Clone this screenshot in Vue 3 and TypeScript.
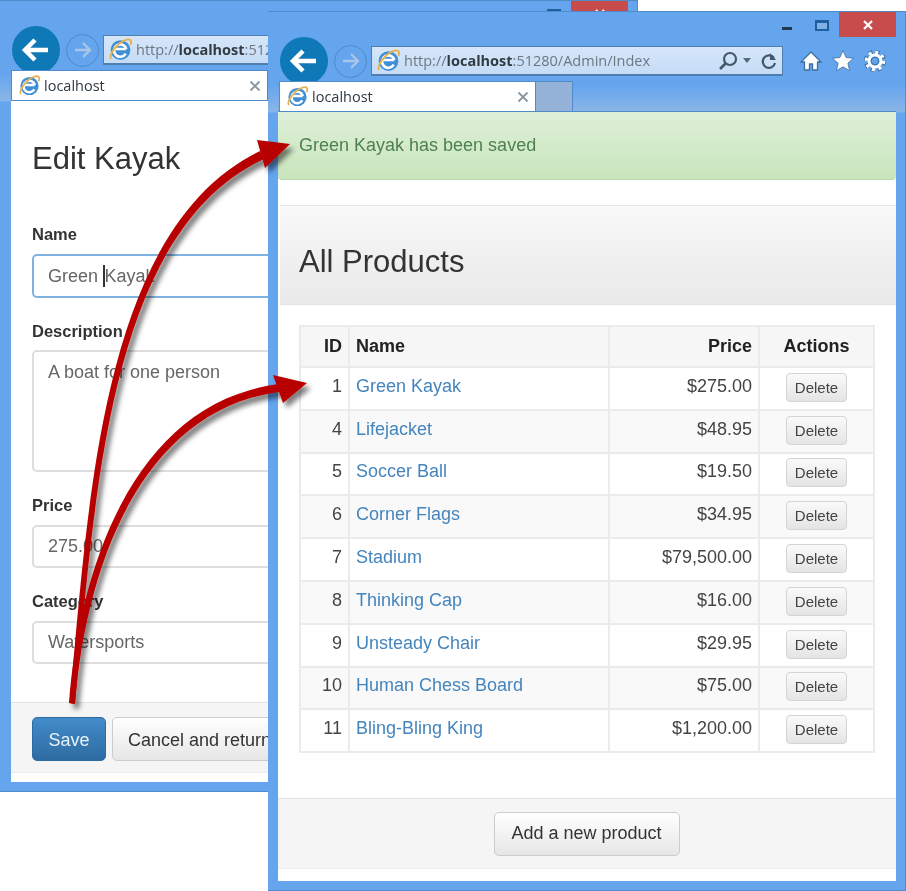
<script setup lang="ts">
interface Win {
  id: string
  cls: string
}

interface Product {
  id: number
  name: string
  price: string
}

const windows: Win[] = [
  { id: 'edit', cls: 'browser--edit' },
  { id: 'list', cls: 'browser--list' }
]

const products: Product[] = [
  { id: 1, name: 'Green Kayak', price: '$275.00' },
  { id: 4, name: 'Lifejacket', price: '$48.95' },
  { id: 5, name: 'Soccer Ball', price: '$19.50' },
  { id: 6, name: 'Corner Flags', price: '$34.95' },
  { id: 7, name: 'Stadium', price: '$79,500.00' },
  { id: 8, name: 'Thinking Cap', price: '$16.00' },
  { id: 9, name: 'Unsteady Chair', price: '$29.95' },
  { id: 10, name: 'Human Chess Board', price: '$75.00' },
  { id: 11, name: 'Bling-Bling King', price: '$1,200.00' }
]
</script>

<template>
  <div class="desktop">
    <svg class="defs" width="0" height="0">
      <defs>
        <symbol id="ie-logo" viewBox="0 0 24 24">
          <circle cx="12" cy="12.5" r="9.5" fill="#3f8fd6" />
          <path d="M6.5 11.5h11M17 16a6 6 0 1 1 .6-4.5" fill="none" stroke="#fff" stroke-width="2.6" />
          <path d="M3 21C.5 17 9 5 18 2.5c4-1 5 1.500 3.500 5" fill="none" stroke="#e6b04a" stroke-width="1.800" />
        </symbol>
      </defs>
    </svg>

    <section v-for="win in windows" :key="win.id" class="browser" :class="win.cls">
      <div class="titlebar">
        <span class="win-min"></span>
        <span class="win-max"></span>
        <span class="win-close">
          <svg width="12" height="12" viewBox="0 0 12 12"><path d="M2 2l8 8M10 2l-8 8" stroke="#fff" stroke-width="2.200" /></svg>
        </span>
      </div>

      <div class="toolbar">
        <span class="nav-back">
          <svg width="30" height="26" viewBox="0 0 30 26">
            <path d="M27 13H6M14 3L4 13l10 10" fill="none" stroke="#fff" stroke-width="4.500" />
          </svg>
        </span>
        <span class="nav-forward">
          <svg width="20" height="18" viewBox="0 0 20 18">
            <path d="M2 9h15M10 2l7 7-7 7" fill="none" stroke="#a9c6e8" stroke-width="2.400" />
          </svg>
        </span>
        <div class="address">
          <svg class="ie" width="25" height="25"><use href="#ie-logo" /></svg>
          <span class="url">http://<b>localhost</b>:51280/Admin/Index</span>
          <span class="address-tools">
            <svg width="22" height="22" viewBox="0 0 22 22">
              <circle cx="13" cy="9" r="6" fill="none" stroke="#44586c" stroke-width="2.200" />
              <path d="M8.500 13.500L3 19" stroke="#44586c" stroke-width="2.600" />
            </svg>
            <svg width="10" height="6" viewBox="0 0 10 6"><path d="M1 0h8L5 5z" fill="#56697c" /></svg>
            <svg class="refresh" width="18" height="20" viewBox="0 0 18 20">
              <path d="M14 7a6.200 6.200 0 1 0 1 5" fill="none" stroke="#44586c" stroke-width="2.200" />
              <path d="M10 2v7h6z" fill="#44586c" />
            </svg>
          </span>
        </div>
        <div class="tools">
          <svg width="24" height="24" viewBox="0 0 24 24">
            <path d="M12 3L2 13h3.500v8h5v-6h3v6h5v-8H22z" fill="#fff" stroke="#3f6d9f" stroke-width="1.300" />
          </svg>
          <svg width="24" height="24" viewBox="0 0 24 24">
            <path d="M12 1.500l3.100 7 7.400.700-5.600 5 1.700 7.500L12 17.800l-6.600 3.900 1.700-7.500-5.600-5 7.400-.7z" fill="#fff" stroke="#3f6d9f" stroke-width=".8" />
          </svg>
          <svg width="24" height="24" viewBox="0 0 24 24">
            <circle cx="12" cy="12" r="8.600" fill="none" stroke="#3f6d9f" stroke-width="5" stroke-dasharray="4 2.760" />
            <circle cx="12" cy="12" r="8.600" fill="none" stroke="#fff" stroke-width="3.400" stroke-dasharray="3 3.760" />
            <circle cx="12" cy="12" r="6" fill="none" stroke="#fff" stroke-width="3" />
            <circle cx="12" cy="12" r="3.800" fill="#63a4ee" stroke="#3f6d9f" />
          </svg>
        </div>
      </div>

      <div class="tabs">
        <div class="tab">
          <svg width="23" height="23"><use href="#ie-logo" /></svg>
          <span class="tab-title">localhost</span>
          <svg class="tab-x" width="12" height="12" viewBox="0 0 12 12">
            <path d="M1.500 1.500l9 9M10.500 1.500l-9 9" stroke="#8b959e" stroke-width="1.800" />
          </svg>
        </div>
        <div class="tab-empty"></div>
      </div>

      <div v-if="win.id === 'edit'" class="page page--form">
        <div class="form-body">
          <h1>Edit Kayak</h1>
          <label>Name</label>
          <div class="field field--focus">Green <i class="caret"></i>Kayak</div>
          <label class="label--tight">Description</label>
          <div class="field field--area">A boat for one person</div>
          <label>Price</label>
          <div class="field field--short">275.00</div>
          <label>Category</label>
          <div class="field field--short">Watersports</div>
        </div>
        <footer class="page-footer page-footer--form">
          <button class="btn btn--primary">Save</button>
          <button class="btn btn--cancel">Cancel and return to List</button>
        </footer>
      </div>

      <div v-else class="page page--list">
        <div class="alert">Green Kayak has been saved</div>
        <div class="heading">All Products</div>
        <div class="table-wrap">
          <table>
            <colgroup>
              <col style="width: 49px" />
              <col style="width: 260px" />
              <col style="width: 150px" />
              <col style="width: 115px" />
            </colgroup>
            <thead>
              <tr>
                <th class="num">ID</th>
                <th>Name</th>
                <th class="num">Price</th>
                <th class="mid">Actions</th>
              </tr>
            </thead>
            <tbody>
              <tr v-for="p in products" :key="p.id">
                <td class="num">{{ p.id }}</td>
                <td><a>{{ p.name }}</a></td>
                <td class="num">{{ p.price }}</td>
                <td class="mid"><button class="btn-delete">Delete</button></td>
              </tr>
            </tbody>
          </table>
        </div>
        <footer class="page-footer page-footer--list">
          <button class="btn btn--add">Add a new product</button>
        </footer>
      </div>
    </section>

    <!-- callout arrows laid over both windows -->
    <svg class="arrows" width="906" height="891" viewBox="0 0 906 891">
      <defs>
        <filter id="arrow-shadow" x="-20%" y="-20%" width="140%" height="140%">
          <feDropShadow dx="4" dy="5" stdDeviation="2.500" flood-color="#000" flood-opacity=".5" />
        </filter>
      </defs>
      <g fill="#b90006" filter="url(#arrow-shadow)">
        <path d="M69.500 703C89 500 101 228 260 151L264 159C107 232 95 500 75 704Z" />
        <path d="M257 140L290 144 265 168Z" />
        <path d="M69 703C80 560 138 402 279 384L279 392C144 410 86 562 75 704Z" />
        <path d="M273 375L307 383 283 403Z" />
      </g>
    </svg>
  </div>
</template>

<style>
html,
body {
  margin: 0;
  background: #fff;
}
</style>

<style scoped>
.desktop {
  position: relative;
  width: 906px;
  height: 891px;
  overflow: hidden;
  background: #fff;
  font-family: 'Liberation Sans', Arial, sans-serif;
  color: #333;
  filter: blur(0.4px);
}

.defs {
  position: absolute;
}

.browser {
  position: absolute;
  width: 638px;
  box-sizing: border-box;
  display: flex;
  flex-direction: column;
  padding: 0 9px 9px 10px;
  border: 1px solid #4f8bcb;
  border-left-width: 0;
  background: linear-gradient(#64a5ee 0, #64a5ee 72px, #8ab5e6 100px, #64a5ee 101px);
  overflow: hidden;
}

.browser--edit {
  left: 0;
  top: 0;
  height: 792px;
  padding-left: 11px;
}

.browser--list {
  left: 268px;
  top: 11px;
  height: 880px;
}

.browser--list .tabs {
  margin-left: 1px;
}

.titlebar {
  height: 25px;
  display: flex;
  align-items: flex-start;
  justify-content: flex-end;
  flex-shrink: 0;
}

.win-min {
  width: 10px;
  height: 3px;
  margin: 15px 23px 0 0;
  background: #22384f;
}

.win-max {
  box-sizing: border-box;
  width: 14px;
  height: 11px;
  margin: 8px 10px 0 0;
  border: 2px solid #1f5f9e;
  border-top-width: 3px;
  background: #7fb0e8;
}

.win-close {
  width: 57px;
  height: 25px;
  display: flex;
  align-items: center;
  justify-content: center;
  background: #c94c4c;
}

.toolbar {
  height: 48px;
  display: flex;
  align-items: center;
  flex-shrink: 0;
  padding-left: 2px;
}

.browser--edit .toolbar {
  padding-left: 1px;
}

.nav-back {
  width: 48px;
  height: 48px;
  flex-shrink: 0;
  border-radius: 50%;
  background: #0f78b6;
  display: flex;
  align-items: center;
  justify-content: center;
}

.nav-forward {
  box-sizing: border-box;
  width: 33px;
  height: 33px;
  flex-shrink: 0;
  margin-left: 6px;
  border: 1.500px solid #4d8bc7;
  border-radius: 50%;
  display: flex;
  align-items: center;
  justify-content: center;
}

.address {
  box-sizing: border-box;
  width: 412px;
  height: 30px;
  margin-left: 4px;
  flex-shrink: 0;
  display: flex;
  align-items: center;
  padding: 0 4px;
  border: 1px solid #4f7fb0;
  border-bottom-width: 2px;
  background: linear-gradient(#d5e6f9, #c6dcf6);
}

.url {
  margin-left: 3px;
  font-family: 'Open Sans', 'Noto Sans', sans-serif;
  font-size: 14.500px;
  color: #6d7780;
  white-space: nowrap;
}

.url b {
  color: #333b42;
  font-weight: 700;
}

.address-tools {
  margin-left: auto;
  display: flex;
  align-items: center;
  gap: 3px;
}

.refresh {
  margin-left: 5px;
}

.tools {
  margin-left: 16px;
  display: flex;
  gap: 8px;
}

.tabs {
  height: 30px;
  margin-top: -4px;
  position: relative;
  display: flex;
  flex-shrink: 0;
}

.tab {
  box-sizing: border-box;
  width: 257px;
  height: 30px;
  display: flex;
  align-items: center;
  padding: 0 6px 0 6px;
  background: #fff;
  border: 1px solid #4f8bcb;
  border-bottom: 0;
}

.tab-title {
  margin-left: 3px;
  font-family: 'Open Sans', 'Noto Sans', sans-serif;
  font-size: 14.500px;
  color: #2f3a42;
}

.tab-x {
  margin-left: auto;
}

.tab-empty {
  box-sizing: border-box;
  width: 37px;
  height: 30px;
  background: #95b3d8;
  border: 1px solid #4f8bcb;
  border-left: 0;
  border-bottom: 0;
}

.page {
  flex: 1;
  min-height: 0;
  display: flex;
  flex-direction: column;
  background: #fff;
  border-top: 1px solid #4f8bcb;
}

.form-body {
  flex: 1;
  padding: 38px 21px 0;
}

h1 {
  margin: 0 0 45px;
  font-size: 31px;
  line-height: 40px;
  font-weight: 400;
  color: #333;
}

label {
  display: block;
  height: 20px;
  margin-bottom: 10px;
  font-size: 16.500px;
  line-height: 20px;
  font-weight: 700;
  color: #333;
}

.label--tight {
  margin-bottom: 9px;
}

.field {
  box-sizing: border-box;
  height: 44px;
  margin-bottom: 23px;
  padding: 0 14px;
  display: flex;
  align-items: center;
  white-space: pre;
  font-size: 18px;
  color: #666;
  border: 2px solid #ddd;
  border-radius: 5px;
  background: #fff;
}

.field--focus {
  border-color: #7fb3df;
}

.field--area {
  height: 122px;
  align-items: flex-start;
  padding-top: 9px;
  line-height: 22px;
}

.field--short {
  height: 43px;
}

.caret {
  width: 1.500px;
  height: 22px;
  background: #333;
}

.page-footer {
  flex-shrink: 0;
  display: flex;
  box-sizing: border-box;
  height: 71px;
  padding-top: 13px;
  background: #f5f5f5;
  border-top: 1px solid #e3e3e3;
  border-bottom: 1px solid #ececec;
}

.page-footer--form {
  gap: 6px;
  margin-bottom: 9px;
  padding-top: 14px;
}

.page-footer--list {
  justify-content: center;
  margin-bottom: 12px;
}

.btn {
  box-sizing: border-box;
  height: 44px;
  padding: 0 15px 2px;
  flex-shrink: 0;
  font-family: inherit;
  font-size: 18px;
  color: #333;
  border: 1px solid #ccc;
  border-radius: 5px;
  background: linear-gradient(#fff, #e6e6e6);
  white-space: nowrap;
}

.page-footer--form .btn {
  padding-bottom: 0;
  padding-top: 2px;
}

.btn--primary {
  margin-left: 21px;
  width: 74px;
  color: #e8f1f8;
  border-color: #2b6ca3;
  background: linear-gradient(#428bca, #2d6ca2);
}

.btn--add {
  width: 186px;
  margin-left: -1px;
}

.alert {
  box-sizing: border-box;
  height: 68px;
  flex-shrink: 0;
  display: flex;
  align-items: center;
  padding: 0 21px;
  font-size: 18px;
  color: #4f8150;
  background: linear-gradient(#dff0d8, #c8e5bc);
  border-bottom: 1px solid #b9d8ac;
  border-radius: 0 0 4px 4px;
}

.heading {
  box-sizing: border-box;
  height: 100px;
  margin: 25px 0 0 2px;
  flex-shrink: 0;
  display: flex;
  align-items: center;
  padding: 14px 0 0 19px;
  font-size: 31px;
  color: #333;
  border-top: 1px solid #e6e6e6;
  border-bottom: 1px solid #e4e4e4;
  background: linear-gradient(#f9f9f9, #f5f5f5 20%, #e9e9e9);
}

.table-wrap {
  flex: 1;
  padding: 20px 21px 0;
}

table {
  table-layout: fixed;
  width: 574px;
  border-collapse: collapse;
  font-size: 18px;
}

th,
td {
  box-sizing: border-box;
  padding: 0 6px;
  border: 2px solid #ebebeb;
  text-align: left;
  color: #444;
}

th {
  font-weight: 700;
  color: #222;
  height: 41px;
  background: #f6f6f6;
}

td {
  height: 42.800px;
  padding-bottom: 4px;
}

td.mid {
  padding-bottom: 2px;
}

tbody tr:nth-child(even) td {
  background: #f9f9f9;
}

th.num,
td.num {
  text-align: right;
}

th.mid,
td.mid {
  text-align: center;
}

a {
  color: #4585bd;
}

.btn-delete {
  box-sizing: border-box;
  width: 61px;
  height: 29px;
  padding: 0;
  vertical-align: middle;
  font-family: inherit;
  font-size: 15px;
  color: #444;
  border: 1px solid #d4d4d4;
  border-radius: 4px;
  background: linear-gradient(#fafafa, #e4e4e4);
}

.arrows {
  position: absolute;
  left: 0;
  top: 0;
  pointer-events: none;
}
</style>
